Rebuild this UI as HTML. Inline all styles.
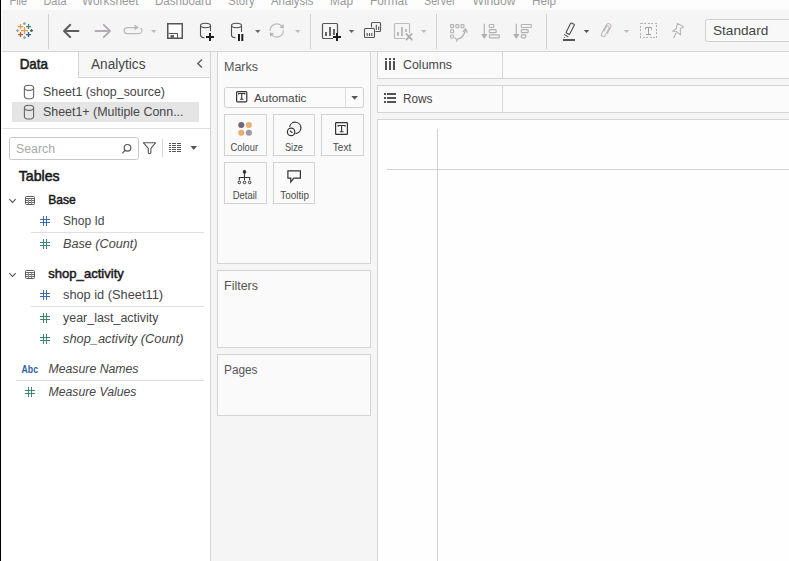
<!DOCTYPE html>
<html><head><meta charset="utf-8">
<style>
html,body{margin:0;padding:0;width:789px;height:561px;overflow:hidden;background:#fff;}
svg{display:block;font-family:"Liberation Sans",sans-serif;}
text{font-family:"Liberation Sans",sans-serif;}
</style></head><body>
<svg width="789" height="561" viewBox="0 0 789 561" shape-rendering="crispEdges">
<!-- base -->
<rect x="0" y="0" width="789" height="561" fill="#f5f5f5"/>
<!-- menu bar -->
<rect x="0" y="0" width="789" height="10" fill="#fdfdfd"/>
<g fill="#9a9a9a" font-size="12">
<text x="9.5" y="5" textLength="17.5" lengthAdjust="spacingAndGlyphs">File</text>
<text x="43.5" y="5" textLength="23" lengthAdjust="spacingAndGlyphs">Data</text>
<text x="82" y="5" textLength="56.5" lengthAdjust="spacingAndGlyphs">Worksheet</text>
<text x="155" y="5" textLength="56.5" lengthAdjust="spacingAndGlyphs">Dashboard</text>
<text x="228" y="5" textLength="26.8" lengthAdjust="spacingAndGlyphs">Story</text>
<text x="271" y="5" textLength="42.5" lengthAdjust="spacingAndGlyphs">Analysis</text>
<text x="330" y="5" textLength="23" lengthAdjust="spacingAndGlyphs">Map</text>
<text x="370" y="5" textLength="37.5" lengthAdjust="spacingAndGlyphs">Format</text>
<text x="424" y="5" textLength="31.5" lengthAdjust="spacingAndGlyphs">Server</text>
<text x="472.5" y="5" textLength="43" lengthAdjust="spacingAndGlyphs">Window</text>
<text x="532" y="5" textLength="24" lengthAdjust="spacingAndGlyphs">Help</text>
</g>

<!-- TOOLBAR ICONS -->
<g shape-rendering="geometricPrecision">
<!-- tableau logo -->
<g stroke-width="1.25" fill="none">
 <path d="M21,30.5H28M24.5,27V34" stroke="#e59a45"/>
 <path d="M18,26.5H23M20.5,24V29" stroke="#e59a45"/>
 <path d="M26,26.5H31M28.5,24V29" stroke="#3f8877"/>
 <path d="M18,34.5H23M20.5,32V37" stroke="#b65d32"/>
 <path d="M26,34.5H31M28.5,32V37" stroke="#2f5c98"/>
 <path d="M23,23.5H26M24.5,22V25" stroke="#a49cb0"/>
 <path d="M23,37.5H26M24.5,36V39" stroke="#a49cb0"/>
 <path d="M16,30.5H19M17.5,29V32" stroke="#a8a8a8"/>
 <path d="M30,30.5H33M31.5,29V32" stroke="#56605f"/>
</g>
</g>
<rect x="48" y="14" width="1" height="35" fill="#d0d0d0"/>
<rect x="310" y="14" width="1" height="35" fill="#d0d0d0"/>
<rect x="436" y="14" width="1" height="35" fill="#d0d0d0"/>
<rect x="546" y="14" width="1" height="35" fill="#d0d0d0"/>
<g shape-rendering="geometricPrecision" fill="none" stroke-linecap="round" stroke-linejoin="round">
 <!-- back -->
 <path d="M64,31H78.5M70.3,24.8L64,31L70.3,37.2" stroke="#5c5c5c" stroke-width="1.9"/>
 <!-- forward -->
 <path d="M95.5,31H110M103.8,24.8L110,31L103.8,37.2" stroke="#b2adb2" stroke-width="1.9"/>
 <!-- redo loop -->
 <path d="M134.8,27.6H127.2A3,3 0 0 0 127.2,33.6H138.9A3,3 0 0 0 140.8,28.3" stroke="#bdb9bd" stroke-width="1.2"/>
 <path d="M134.6,24.5L138.8,27.4L134.6,30.3Z" fill="#b9b5b9" stroke="none"/>
 <!-- save -->
 <rect x="167.75" y="23.75" width="14.5" height="14.5" stroke="#555" stroke-width="1.5" fill="#fff" stroke-linejoin="miter"/>
 <path d="M168.5,33.5H177.5V38.5" stroke="#555" stroke-width="1" stroke-linecap="butt" stroke-linejoin="miter"/>
 <rect x="170.5" y="35" width="3.5" height="3.5" fill="#666" stroke="none"/>
 <!-- db plus -->
 <path d="M200.5,25.5V35.3Q200.5,37.3 204,37.8M210.5,25.5V30.8" stroke="#505050" stroke-width="1.1"/>
 <ellipse cx="205.5" cy="25.5" rx="5" ry="2.2" stroke="#505050" stroke-width="1.1"/>
 <path d="M206,37.1H214M210,33.1V41.1" stroke="#f5f5f5" stroke-width="4" stroke-linecap="butt"/>
 <path d="M206,37.1H214M210,33.1V41.1" stroke="#1e1e1e" stroke-width="2" stroke-linecap="butt"/>
 <!-- db pause -->
 <path d="M231.5,25.5V35.3Q231.5,37.3 235,37.8M241.5,25.5V31.5" stroke="#505050" stroke-width="1.1"/>
 <ellipse cx="236.5" cy="25.5" rx="5" ry="2.2" stroke="#505050" stroke-width="1.1"/>
 <rect x="237.3" y="33" width="7" height="9" fill="#f5f5f5" stroke="none"/>
 <rect x="238" y="34" width="2" height="7" fill="#1e1e1e" stroke="none"/>
 <rect x="241.3" y="34" width="2" height="7" fill="#1e1e1e" stroke="none"/>
 <!-- refresh -->
 <path d="M270.20,30.50A6.6,6.6 0 0 1 281.70,26.08M283.40,30.50A6.6,6.6 0 0 1 271.90,34.92" stroke="#bcbcbc" stroke-width="1.2"/>
 <path d="M283.85,28.46L283.44,24.12L279.57,27.60ZM269.75,32.54L270.16,36.88L274.03,33.40Z" fill="#b4b4b4" stroke="none"/>
 <!-- new worksheet -->
 <rect x="322.5" y="23.5" width="15" height="15" rx="1" stroke="#555" stroke-width="1.2"/>
 <rect x="325" y="32" width="2" height="4" fill="#666" stroke="none"/>
 <rect x="329" y="27" width="2" height="9" fill="#666" stroke="none"/>
 <rect x="333" y="29" width="2" height="6" fill="#666" stroke="none"/>
 <path d="M333,37H341M337,33V41" stroke="#f5f5f5" stroke-width="4" stroke-linecap="butt"/>
 <path d="M333,37H341M337,33V41" stroke="#1e1e1e" stroke-width="2" stroke-linecap="butt"/>
 <!-- duplicate -->
 <rect x="371.5" y="22.5" width="9" height="9" rx="1" stroke="#555" stroke-width="1.1"/>
 <path d="M374,30V27.5M376.3,30V24.8M378.6,30V26.5" stroke="#555" stroke-width="1.1" stroke-linecap="butt"/>
 <rect x="363.5" y="27.5" width="12" height="11" fill="#f5f5f5" stroke="none"/>
 <rect x="364.5" y="28.5" width="10" height="9" rx="1" stroke="#555" stroke-width="1.1"/>
 <path d="M367.2,36V33M369.5,36V33M371.8,36V33" stroke="#555" stroke-width="1.1" stroke-linecap="butt"/>
 <!-- clear sheet -->
 <rect x="394.5" y="23.5" width="15" height="15" rx="1" stroke="#bcbcbc" stroke-width="1.2"/>
 <rect x="397" y="32" width="2" height="4" fill="#bdbdbd" stroke="none"/>
 <rect x="401" y="27" width="2" height="9" fill="#bdbdbd" stroke="none"/>
 <rect x="405" y="29" width="2" height="3" fill="#bdbdbd" stroke="none"/>
 <path d="M406,33.5L412.2,40.2M412.2,33.5L406,40.2" stroke="#f5f5f5" stroke-width="4" stroke-linecap="butt"/>
 <path d="M406,33.5L412.2,40.2M412.2,33.5L406,40.2" stroke="#a9a9a9" stroke-width="1.7" stroke-linecap="butt"/>
 <!-- swap -->
 <g stroke="#b2b2b2" stroke-width="1.1">
  <rect x="450.6" y="24.6" width="3" height="3" rx="0.6"/>
  <rect x="455.8" y="24.6" width="3" height="3" rx="0.6"/>
  <rect x="461" y="24.6" width="3" height="3" rx="0.6"/>
  <rect x="450.6" y="29.8" width="3" height="3" rx="0.6"/>
  <rect x="450.6" y="35" width="3" height="3" rx="0.6"/>
  <path d="M457.5,39.3Q463.8,37.3 465.3,30.5" stroke-width="1.2"/>
  <path d="M463,31.6L465.6,28.6L467,32.3" stroke-width="1.2"/>
  <path d="M455.3,38.2L457.1,39.6L456.6,41.4" stroke-width="1.2"/>
 </g>
 <!-- sort asc -->
 <g stroke="#b2b2b2" stroke-width="1.2">
  <path d="M484.3,24V37"/>
  <path d="M482,34.5L484.3,38L486.6,34.5Z" fill="#b2b2b2"/>
  <rect x="489.3" y="24.5" width="4.5" height="3" rx="0.8"/>
  <rect x="489.3" y="29.7" width="6.8" height="3" rx="0.8"/>
  <rect x="489.3" y="34.9" width="10" height="3" rx="0.8"/>
 </g>
 <!-- sort desc -->
 <g stroke="#b2b2b2" stroke-width="1.2">
  <path d="M516.3,24V37"/>
  <path d="M514,34.5L516.3,38L518.6,34.5Z" fill="#b2b2b2"/>
  <rect x="521.3" y="24.5" width="10" height="3" rx="0.8"/>
  <rect x="521.3" y="29.7" width="6.8" height="3" rx="0.8"/>
  <rect x="521.3" y="34.9" width="4.5" height="3" rx="0.8"/>
 </g>
 <!-- pen -->
 <g transform="translate(570.2,28.7) rotate(27)">
  <rect x="-2" y="-5.6" width="4" height="11.2" rx="0.6" stroke="#4a4a4a" stroke-width="1.1"/>
 </g>
 <path d="M564.6,34.6L567.9,36.7" stroke="#555" stroke-width="1.1"/>
 <circle cx="564.3" cy="37.3" r="0.6" fill="#555" stroke="none"/>
 <rect x="563" y="39" width="12" height="2" fill="#555" stroke="none"/>
 <!-- paperclip -->
 <g transform="translate(606.2,30.3) rotate(28)">
  <path d="M2.5,2V-4.8A2.5,2.5 0 0 0 -2.5,-4.8V5A2,2 0 0 0 1.5,5V-3.2A1.5,1.5 0 0 0 -1.5,-3.2V1.5" stroke="#bdb8bd" stroke-width="1.05"/>
 </g>
 <!-- text box -->
 <rect x="640.5" y="23.5" width="16" height="14" stroke="#b5b0b5" stroke-width="1" stroke-dasharray="2,1.5" stroke-linecap="butt" shape-rendering="crispEdges"/>
 <path d="M645.5,29V27.5H651.5V29M648.5,27.5V34.5M646.5,34.5H650.5" stroke="#a39ea3" stroke-width="1" stroke-linecap="square" stroke-linejoin="miter"/>
 <!-- pin -->
 <path d="M677.4,23.4L683.6,26.7L680.4,28.7L680.6,34.7L676.6,31.8L672.6,31.2L676.2,28.8Z" stroke="#b8b3b8" stroke-width="1.05"/>
 <path d="M675.8,33.2L673.9,37.8" stroke="#b8b3b8" stroke-width="1.1"/>
 <!-- dropdown triangles -->
 <path d="M151,30H156.5L153.75,33Z" fill="#bbb" stroke="none"/>
 <path d="M255,30H260.5L257.75,33Z" fill="#666" stroke="none"/>
 <path d="M295,30H300.5L297.75,33Z" fill="#bbb" stroke="none"/>
 <path d="M348.8,30H354.3L351.55,33Z" fill="#666" stroke="none"/>
 <path d="M421,30H426.5L423.75,33Z" fill="#bbb" stroke="none"/>
 <path d="M583.8,30H589.3L586.55,33Z" fill="#555" stroke="none"/>
 <path d="M623.8,30H629.3L626.55,33Z" fill="#bbb" stroke="none"/>
</g>
<!-- standard box -->
<rect x="705.5" y="19.5" width="100" height="22" rx="2" fill="#f8f8f8" stroke="#cfcfcf" stroke-width="1" shape-rendering="geometricPrecision"/>
<text x="713" y="35" font-size="13.5" fill="#454545" textLength="55.3" lengthAdjust="spacingAndGlyphs">Standard</text>

<!-- toolbar line -->
<rect x="0" y="51" width="789" height="1" fill="#d4d4d4"/>

<!-- DATA PANE -->
<rect x="1" y="52" width="209" height="509" fill="#ffffff"/>
<rect x="210" y="51" width="1" height="510" fill="#d4d4d4"/>
<!-- analytics tab -->
<rect x="78" y="52" width="132" height="25" fill="#f7f7f7"/>
<rect x="78" y="52" width="1" height="26" fill="#d4d4d4"/>
<rect x="78" y="77" width="132" height="1" fill="#d4d4d4"/>

<!-- tab texts -->
<text x="19.7" y="69" font-size="14.2" stroke="#1a1a1a" stroke-width="0.55" fill="#1a1a1a" textLength="28.3" lengthAdjust="spacingAndGlyphs">Data</text>
<text x="91" y="69" font-size="14" fill="#454545" textLength="54.5" lengthAdjust="spacingAndGlyphs">Analytics</text>
<path d="M202,59.5L197.8,63.5L202,67.5" stroke="#555" stroke-width="1.3" fill="none" shape-rendering="geometricPrecision"/>
<!-- sources -->
<rect x="12" y="102" width="187" height="20" fill="#e5e5e5"/>
<g fill="none" stroke="#666" stroke-width="1.1" shape-rendering="geometricPrecision">
 <ellipse cx="29" cy="87.8" rx="4.6" ry="2.6"/>
 <path d="M24.4,87.8V96.2A4.6,2.6 0 0 0 33.6,96.2V87.8"/>
 <ellipse cx="29" cy="107.8" rx="4.6" ry="2.6"/>
 <path d="M24.4,107.8V116.4A4.6,2.6 0 0 0 33.6,116.4V107.8"/>
</g>
<text x="43" y="96" font-size="12.5" fill="#454545" textLength="122" lengthAdjust="spacingAndGlyphs">Sheet1 (shop_source)</text>
<text x="43" y="115.5" font-size="12.5" fill="#454545" textLength="140.5" lengthAdjust="spacingAndGlyphs">Sheet1+ (Multiple Conn...</text>
<rect x="2" y="128" width="208" height="1" fill="#e0e0e0"/>
<!-- search -->
<rect x="9.5" y="137.5" width="129" height="22" rx="2" fill="#fff" stroke="#c9c9c9" stroke-width="1" shape-rendering="geometricPrecision"/>
<text x="16" y="153" font-size="12.5" fill="#a9a9a9" textLength="39" lengthAdjust="spacingAndGlyphs">Search</text>
<g fill="none" stroke="#555" stroke-width="1.2" shape-rendering="geometricPrecision">
 <circle cx="127.5" cy="147.8" r="3.3"/>
 <path d="M125.2,150.2L122.3,153.3"/>
 <!-- funnel -->
 <path d="M143.3,142.7H155.7L150.9,148.3V152.4Q150.9,153.6 149.6,153.6Q148.3,153.6 148.3,152.4V148.3Z" stroke-width="1.1" stroke-linejoin="round"/>
</g>
<rect x="162" y="139" width="1" height="18" fill="#d4d4d4"/>
<g fill="#555">
 <g shape-rendering="crispEdges"><rect x="169" y="143" width="2" height="1"/><rect x="172" y="143" width="4" height="1"/><rect x="177" y="143" width="4" height="1"/><rect x="169" y="145" width="2" height="1"/><rect x="172" y="145" width="4" height="1"/><rect x="177" y="145" width="4" height="1"/><rect x="169" y="147" width="2" height="1"/><rect x="172" y="147" width="4" height="1"/><rect x="177" y="147" width="4" height="1"/><rect x="169" y="149" width="2" height="1"/><rect x="172" y="149" width="4" height="1"/><rect x="177" y="149" width="4" height="1"/><rect x="169" y="151" width="2" height="1"/><rect x="172" y="151" width="4" height="1"/><rect x="177" y="151" width="4" height="1"/></g>
 <path d="M190.5,146H197L193.75,150Z" shape-rendering="geometricPrecision"/>
</g>
<!-- tables -->
<text x="18.7" y="181" font-size="14.3" font-weight="normal" stroke="#1a1a1a" stroke-width="0.55" fill="#1a1a1a" textLength="41" lengthAdjust="spacingAndGlyphs">Tables</text>
<g fill="none" stroke="#555" stroke-width="1.1" shape-rendering="geometricPrecision">
 <path d="M9.3,199.2L12.5,202.4L15.7,199.2"/>
 <path d="M9.3,273.2L12.5,276.4L15.7,273.2"/>
</g>
<g shape-rendering="crispEdges">
<rect x="25.5" y="196.5" width="9" height="8" rx="1" fill="#fff" stroke="#5a5a5a" stroke-width="1" shape-rendering="geometricPrecision"/>
 <path d="M26,198.5H34M26,200.5H34M26,202.5H34" stroke="#6a6a6a" stroke-width="1"/>
 <path d="M28.5,199V204M31.5,199V204" stroke="#8a8a8a" stroke-width="1"/>
<rect x="25.5" y="270.5" width="9" height="8" rx="1" fill="#fff" stroke="#5a5a5a" stroke-width="1" shape-rendering="geometricPrecision"/>
 <path d="M26,272.5H34M26,274.5H34M26,276.5H34" stroke="#6a6a6a" stroke-width="1"/>
 <path d="M28.5,273V278M31.5,273V278" stroke="#8a8a8a" stroke-width="1"/>
</g>
<text x="48.3" y="204" font-size="12.8" font-weight="normal" stroke="#1a1a1a" stroke-width="0.5" fill="#1a1a1a" textLength="27.5" lengthAdjust="spacingAndGlyphs">Base</text>
<text x="48.3" y="278" font-size="12.8" font-weight="normal" stroke="#1a1a1a" stroke-width="0.5" fill="#1a1a1a" textLength="75.5" lengthAdjust="spacingAndGlyphs">shop_activity</text>
<!-- field rows -->
<g fill="#454545" font-size="12.5">
<text x="63" y="225" textLength="41.5" lengthAdjust="spacingAndGlyphs">Shop Id</text>
<text x="63" y="248" font-style="italic" textLength="74.5" lengthAdjust="spacingAndGlyphs">Base (Count)</text>
<text x="63" y="299" textLength="100" lengthAdjust="spacingAndGlyphs">shop id (Sheet11)</text>
<text x="63" y="322" textLength="95.5" lengthAdjust="spacingAndGlyphs">year_last_activity</text>
<text x="63" y="343" font-style="italic" textLength="120.5" lengthAdjust="spacingAndGlyphs">shop_activity (Count)</text>
<text x="48.5" y="373" font-style="italic" textLength="90" lengthAdjust="spacingAndGlyphs">Measure Names</text>
<text x="48.5" y="396" font-style="italic" textLength="88" lengthAdjust="spacingAndGlyphs">Measure Values</text>
</g>
<rect x="31" y="232" width="173" height="1" fill="#dedede"/>
<rect x="31" y="306" width="173" height="1" fill="#dedede"/>
<rect x="16" y="380" width="188" height="1" fill="#dedede"/>
<!-- hash icons -->
<g shape-rendering="crispEdges" stroke-width="1" fill="none">
<path d="M43.5,216V226M46.5,216V226M40,219.5H50M40,222.5H50" stroke="#3b6ea9"/>
<path d="M43.5,239V249M46.5,239V249M40,242.5H50M40,245.5H50" stroke="#3b8773"/>
<path d="M43.5,290V300M46.5,290V300M40,293.5H50M40,296.5H50" stroke="#3b6ea9"/>
<path d="M43.5,313V323M46.5,313V323M40,316.5H50M40,319.5H50" stroke="#3b8773"/>
<path d="M43.5,334V344M46.5,334V344M40,337.5H50M40,340.5H50" stroke="#3b8773"/>
<path d="M28.5,387V397M31.5,387V397M25,390.5H35M25,393.5H35" stroke="#3b8773"/>
</g>
<text x="21.5" y="373" font-size="10" font-weight="bold" fill="#2e5f9e" textLength="16.5" lengthAdjust="spacingAndGlyphs">Abc</text>


<!-- MARKS COLUMN -->
<rect x="217.5" y="51.5" width="153" height="212" fill="#fafafa" stroke="#d4d4d4" stroke-width="1"/>
<rect x="217.5" y="270.5" width="153" height="77" fill="#fafafa" stroke="#d4d4d4" stroke-width="1"/>
<rect x="217.5" y="354.5" width="153" height="61" fill="#fafafa" stroke="#d4d4d4" stroke-width="1"/>
<g fill="#555" font-size="12.5">
<text x="224" y="71" textLength="34" lengthAdjust="spacingAndGlyphs">Marks</text>
<text x="224" y="290" textLength="34" lengthAdjust="spacingAndGlyphs">Filters</text>
<text x="224" y="374" textLength="33.5" lengthAdjust="spacingAndGlyphs">Pages</text>
</g>
<!-- automatic dropdown -->
<rect x="224.5" y="87.5" width="139" height="20" rx="2" fill="#fbfbfb" stroke="#d0d0d0" stroke-width="1" shape-rendering="geometricPrecision"/>
<rect x="345" y="88" width="1" height="19" fill="#dcdcdc"/>
<path d="M351.3,96H358L354.65,99.7Z" fill="#555" shape-rendering="geometricPrecision"/>
<g shape-rendering="geometricPrecision" fill="none" stroke="#333">
 <rect x="236.6" y="91.6" width="10.2" height="10.2" rx="1" stroke-width="1.2"/>
 <path d="M238.6,94.6V93.5H244.8V94.6M241.7,93.5V99.3M240,99.3H243.4" stroke-width="1.1"/>
</g>
<text x="254" y="102" font-size="11.2" fill="#454545" textLength="52.5" lengthAdjust="spacingAndGlyphs">Automatic</text>
<!-- mark buttons -->
<g fill="#fafafa" stroke="#d2d2d2" stroke-width="1">
 <rect x="224.5" y="114.5" width="42" height="41"/>
 <rect x="273.5" y="114.5" width="41" height="41"/>
 <rect x="321.5" y="114.5" width="42" height="41"/>
 <rect x="224.5" y="162.5" width="42" height="41"/>
 <rect x="273.5" y="162.5" width="41" height="41"/>
</g>
<g shape-rendering="geometricPrecision">
 <circle cx="241.3" cy="125" r="3.05" fill="#73667a"/>
 <circle cx="248.9" cy="125" r="3.05" fill="#efae72"/>
 <circle cx="241.3" cy="132.7" r="3.05" fill="#efab6c"/>
 <circle cx="248.9" cy="132.7" r="3.05" fill="#9d97a5"/>
 <!-- size -->
 <path d="M295.5,133.6A5.7,5.7 0 1 0 289.6,126.9" fill="none" stroke="#333" stroke-width="1.2"/>
 <circle cx="291.1" cy="131.9" r="3.7" fill="none" stroke="#333" stroke-width="1.2"/>
 <path d="M289.9,130.7L292.5,132.8" stroke="#333" stroke-width="1.1"/>
 <!-- text icon -->
 <rect x="335.6" y="122.6" width="11.8" height="11.8" rx="0.6" fill="none" stroke="#333" stroke-width="1.2"/>
 <path d="M338.2,126.8V125.5H345V126.8M341.6,125.5V131.8M339.8,131.8H343.5" fill="none" stroke="#333" stroke-width="1.1"/>
 <!-- detail -->
 <circle cx="244.5" cy="171.9" r="1.8" fill="#333"/>
 <path d="M244.5,172V180.2M239.3,180.2V177.5H249.7V180.2" fill="none" stroke="#333" stroke-width="1.1"/>
 <circle cx="239.3" cy="182.4" r="1.3" fill="#fafafa" stroke="#333" stroke-width="1"/>
 <circle cx="244.5" cy="182.4" r="1.3" fill="#fafafa" stroke="#333" stroke-width="1"/>
 <circle cx="249.7" cy="182.4" r="1.3" fill="#fafafa" stroke="#333" stroke-width="1"/>
 <!-- tooltip -->
 <path d="M287.9,170.9H300.4V178.2H293.8L290.8,182V178.2H287.9Z" fill="none" stroke="#333" stroke-width="1.2" stroke-linejoin="miter"/>
</g>
<g fill="#4a4a4a" font-size="10.5">
<text x="230.5" y="151" textLength="27.5" lengthAdjust="spacingAndGlyphs">Colour</text>
<text x="285" y="151" textLength="17.8" lengthAdjust="spacingAndGlyphs">Size</text>
<text x="332.8" y="151" textLength="18.5" lengthAdjust="spacingAndGlyphs">Text</text>
<text x="232.7" y="198.5" textLength="24.3" lengthAdjust="spacingAndGlyphs">Detail</text>
<text x="280.2" y="198.5" textLength="28.8" lengthAdjust="spacingAndGlyphs">Tooltip</text>
</g>

<!-- VIEW COLUMN -->
<rect x="377.5" y="51.5" width="500" height="27" fill="#fafafa" stroke="#d4d4d4" stroke-width="1"/>
<rect x="377.5" y="85.5" width="500" height="27" fill="#fafafa" stroke="#d4d4d4" stroke-width="1"/>
<rect x="502" y="52" width="1" height="26" fill="#d4d4d4"/>
<rect x="502" y="86" width="1" height="26" fill="#d4d4d4"/>
<rect x="503" y="52" width="286" height="26" fill="#fbfbfb"/>
<rect x="503" y="86" width="286" height="26" fill="#fbfbfb"/>
<g fill="#545454" shape-rendering="crispEdges">
 <rect x="385" y="58" width="2" height="2"/><rect x="385" y="61" width="2" height="9"/>
 <rect x="389" y="58" width="2" height="2"/><rect x="389" y="61" width="2" height="9"/>
 <rect x="393" y="58" width="2" height="2"/><rect x="393" y="61" width="2" height="9"/>
 <rect x="384" y="93" width="2" height="2"/><rect x="387" y="93" width="9" height="2"/>
 <rect x="384" y="97" width="2" height="2"/><rect x="387" y="97" width="9" height="2"/>
 <rect x="384" y="101" width="2" height="2"/><rect x="387" y="101" width="9" height="2"/>
</g>
<text x="403" y="69" font-size="12.5" fill="#454545" textLength="49" lengthAdjust="spacingAndGlyphs">Columns</text>
<text x="403" y="103" font-size="12.5" fill="#454545" textLength="29.5" lengthAdjust="spacingAndGlyphs">Rows</text>
<!-- view -->
<rect x="377.5" y="119.5" width="500" height="500" fill="#fefefe" stroke="#d4d4d4" stroke-width="1"/>
<rect x="437" y="129" width="1" height="432" fill="#d2d2d2"/>
<rect x="387" y="169" width="402" height="1" fill="#d2d2d2"/>

<!-- left black edge -->
<rect x="0" y="0" width="1" height="561" fill="#000"/>
<rect x="1" y="0" width="1" height="561" fill="#fff"/>

</svg>
</body></html>
